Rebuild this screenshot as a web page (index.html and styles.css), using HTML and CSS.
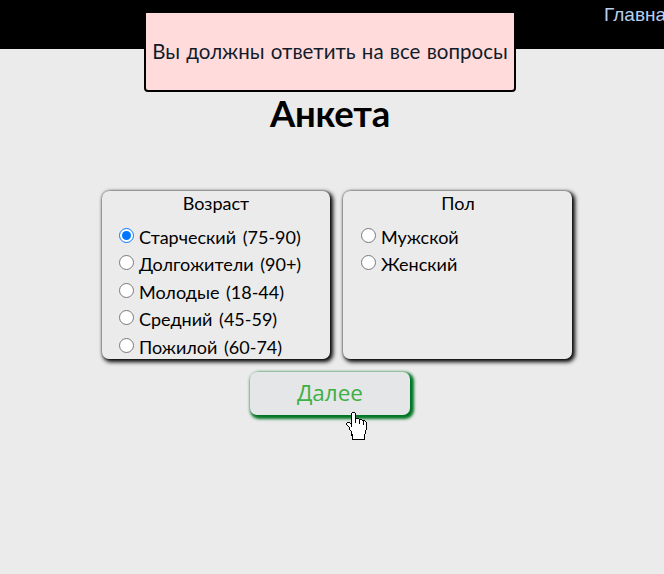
FILE: index.html
```html
<!DOCTYPE html>
<html lang="ru">
<head>
<meta charset="utf-8">
<title>Анкета</title>
<link rel="stylesheet" href="styles.css">
</head>
<body>
<header class="topbar"><a class="nav-link">Главная</a></header>
<div class="alert"><span class="alert-text">Вы должны ответить на все вопросы</span></div>
<main>
  <h1><span>Анкета</span></h1>
  <form class="survey">
    <div class="cards">
      <section class="card">
        <h2>Возраст</h2>
        <label class="option"><input type="radio" name="age" checked><span>Старческий <b>(75-90)</b></span></label>
        <label class="option"><input type="radio" name="age"><span>Долгожители <b>(90+)</b></span></label>
        <label class="option"><input type="radio" name="age"><span>Молодые <b>(18-44)</b></span></label>
        <label class="option"><input type="radio" name="age"><span>Средний <b>(45-59)</b></span></label>
        <label class="option"><input type="radio" name="age"><span>Пожилой <b>(60-74)</b></span></label>
      </section>
      <section class="card card-wide">
        <h2>Пол</h2>
        <label class="option"><input type="radio" name="sex"><span>Мужской</span></label>
        <label class="option"><input type="radio" name="sex"><span>Женский</span></label>
      </section>
    </div>
    <button class="next" type="button">Далее</button>
  </form>
</main>
<svg class="cursor" width="22" height="29" viewBox="0 0 22 29" shape-rendering="crispEdges">
  <path d="M6.500 1.500H8.500L9.500 2.500V7.500H12.500L13.500 8.500H15.500L16.500 9.500H18.500L20.500 11.500V18.500L19.500 19.500V22.500L18.500 23.500V28.200H6.500V25.500L5.500 22.500V20.500L3.500 18.500V16.500L.5 13.500V12.500L1.500 11.500H3.500L5.500 13.500V2.500z" fill="#fff" stroke="#000" stroke-width="1.300"/>
  <path d="M5.500 12v4M9.500 7v5M13.500 8v5M17.500 10v4" fill="none" stroke="#000"/>
</svg>
</body>
</html>
```
FILE: styles.css
```css
* { box-sizing: border-box; }
body {
  margin: 0;
  height: 574px;
  overflow: hidden;
  background: #ebebeb;
  color: #000;
  font-family: Lato, "Open Sans", sans-serif;
}
.topbar {
  height: 49px;
  background: #000;
  overflow: hidden;
  padding: 4px 0 0 604px;
}
.nav-link {
  color: #b8cff0;
  font: 19px/21px "Liberation Sans", sans-serif;
  white-space: nowrap;
}
.alert {
  position: absolute;
  left: 144px;
  top: 11px;
  width: 372px;
  height: 81px;
  padding-bottom: 2px;
  border: 2px solid #000;
  border-radius: 0 0 4px 4px;
  background: #ffdcdb;
  color: #111c2b;
  display: flex;
  align-items: center;
  justify-content: center;
  white-space: nowrap;
  font-size: 20.500px;
  word-spacing: 1px;
}
h1 {
  margin: 0;
  padding: 41px 4px 0 0;
  height: 142px;
  font-size: 36.500px;
  letter-spacing: -.3px;
  line-height: 46px;
  text-align: center;
}
.cards {
  display: flex;
  gap: 13px;
  padding-left: 102px;
}
.card {
  width: 228px;
  height: 168px;
  border-radius: 7px;
  background: #ebebeb;
  box-shadow: 2px 2px 4px 1px #000, 0 0 2px rgba(0, 0, 0, .5);
}
.card-wide {
  width: 229px;
  padding-left: 1px;
}
h2 {
  margin: 0;
  height: 30.500px;
  font-size: 18px;
  font-weight: 400;
  line-height: 24px;
  text-align: center;
}
.option {
  display: flex;
  height: 27.500px;
  padding-left: 17px;
  font-size: 18px;
  line-height: 30px;
  white-space: nowrap;
  word-spacing: 2px;
}
.option input {
  width: 15px;
  height: 15px;
  margin: 6px 5px 0 0;
}
.option b {
  font-weight: 400;
}
.next {
  display: block;
  width: 160px;
  height: 43px;
  margin: 13px 0 0 250px;
  padding: 0 0 2px;
  border: 0;
  border-radius: 7px;
  background: #e4e6e8;
  box-shadow: 2px 2px 3px 2px #007523;
  color: #3eaf45;
  font: 22.500px/41px "Open Sans", sans-serif;
}
.cursor {
  position: absolute;
  left: 346px;
  top: 411px;
}
```
